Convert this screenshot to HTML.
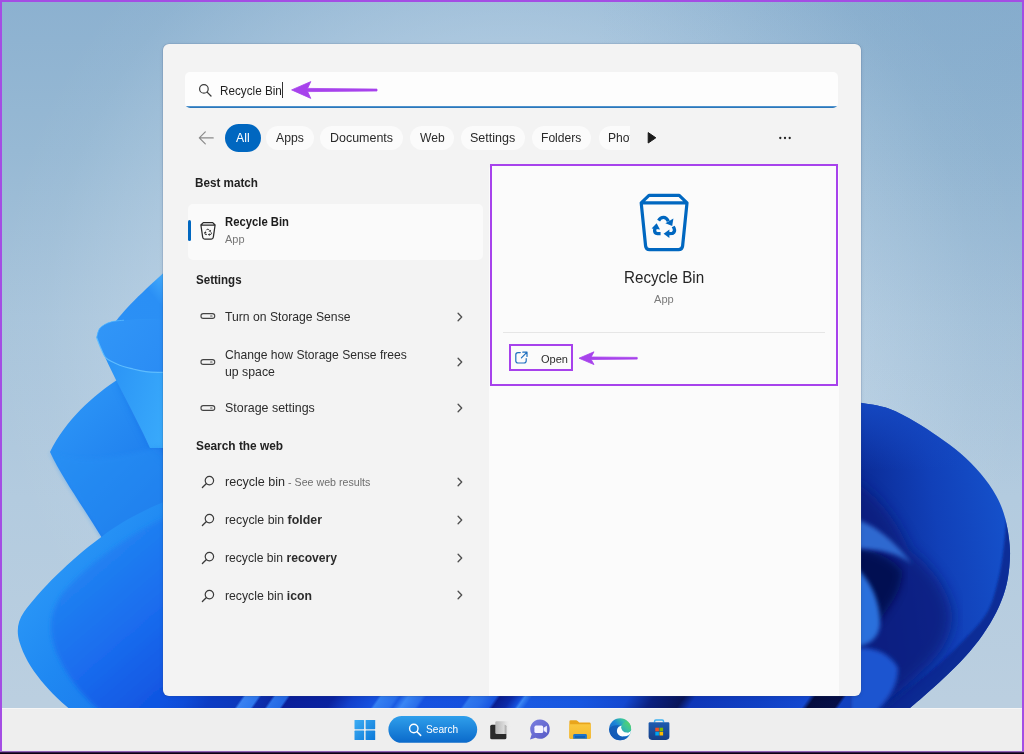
<!DOCTYPE html>
<html>
<head>
<meta charset="utf-8">
<title>Recycle Bin search</title>
<style>
*{box-sizing:border-box;margin:0;padding:0}
html,body{width:1024px;height:754px;overflow:hidden;background:#a9c6dc}
body{position:relative;font-family:"Liberation Sans",sans-serif;color:#1b1b1b}
.abs{position:absolute}
#wall{position:absolute;left:0;top:0;width:1024px;height:754px}
#frame{position:absolute;left:0;top:0;width:1024px;height:754px;border:2px solid #a44de4;border-bottom:0;pointer-events:none;z-index:50}
#frameb{position:absolute;left:0;top:750.6px;width:1024px;height:3.4px;background:linear-gradient(#caa0ec 0,#6d3f97 28%,#14041f 62%,#05000a 100%);z-index:51}
#taskbar{position:absolute;left:0;top:708px;width:1024px;height:46px;background:#eeeeee;border-top:1px solid #f6f6f6}
#panel{position:absolute;left:163px;top:44px;width:698px;height:652px;background:#f3f3f3;border-radius:6px;overflow:hidden;box-shadow:0 0 0 0.6px rgba(60,80,120,0.22),0 1px 4px rgba(0,10,60,0.10)}
#rpane{position:absolute;left:326px;top:120px;width:350px;height:540px;background:#fbfbfb;border-radius:6px 6px 0 0}
#ui{position:absolute;left:0;top:0;width:1024px;height:754px;z-index:10}
.t{position:absolute;white-space:nowrap;transform-origin:0 50%;line-height:1}
.b{font-weight:700}
.g{color:#6b6b6b}
</style>
</head>
<body>
<svg id="wall" viewBox="0 0 1024 754">
<defs>
<linearGradient id="sky" x1="0" y1="0" x2="0" y2="754" gradientUnits="userSpaceOnUse">
<stop offset="0" stop-color="#8cb1d0"/><stop offset="0.2" stop-color="#97b9d4"/><stop offset="0.42" stop-color="#a8c4db"/><stop offset="0.66" stop-color="#b3cbdf"/><stop offset="0.93" stop-color="#bbcfe0"/>
</linearGradient>
<radialGradient id="skyL" cx="512" cy="330" r="520" gradientUnits="userSpaceOnUse">
<stop offset="0" stop-color="#fff" stop-opacity="0.45"/><stop offset="0.55" stop-color="#eef7ff" stop-opacity="0.3"/><stop offset="0.72" stop-color="#eef7ff" stop-opacity="0.17"/><stop offset="0.9" stop-color="#eef7ff" stop-opacity="0.03"/><stop offset="1" stop-color="#eef7ff" stop-opacity="0"/>
</radialGradient>
<radialGradient id="skyR" cx="1024" cy="60" r="430" gradientUnits="userSpaceOnUse">
<stop offset="0" stop-color="#5f8fba" stop-opacity="0.16"/><stop offset="0.6" stop-color="#5f8fba" stop-opacity="0.08"/><stop offset="1" stop-color="#5f8fba" stop-opacity="0"/>
</radialGradient>
<linearGradient id="p1" x1="110" y1="330" x2="170" y2="280" gradientUnits="userSpaceOnUse">
<stop offset="0" stop-color="#2b90f5"/><stop offset="0.7" stop-color="#2a8ff5"/><stop offset="1" stop-color="#46aefc"/>
</linearGradient>
<linearGradient id="p2o" x1="100" y1="380" x2="175" y2="400" gradientUnits="userSpaceOnUse">
<stop offset="0" stop-color="#2a92f5"/><stop offset="1" stop-color="#39aafb"/>
</linearGradient>
<linearGradient id="p2i" x1="100" y1="320" x2="165" y2="370" gradientUnits="userSpaceOnUse">
<stop offset="0" stop-color="#3196f7"/><stop offset="1" stop-color="#2a8cf4"/>
</linearGradient>
<linearGradient id="p3" x1="50" y1="400" x2="165" y2="520" gradientUnits="userSpaceOnUse">
<stop offset="0" stop-color="#2d97f7"/><stop offset="0.6" stop-color="#2182ef"/><stop offset="1" stop-color="#1b72e8"/>
</linearGradient>
<linearGradient id="p4" x1="20" y1="560" x2="170" y2="680" gradientUnits="userSpaceOnUse">
<stop offset="0" stop-color="#2d9bf8"/><stop offset="0.5" stop-color="#1f88f2"/><stop offset="1" stop-color="#1a78ec"/>
</linearGradient>
<linearGradient id="p4i" x1="55" y1="560" x2="175" y2="700" gradientUnits="userSpaceOnUse">
<stop offset="0" stop-color="#2389f3"/><stop offset="0.55" stop-color="#1a6cee"/><stop offset="1" stop-color="#0f52e0"/>
</linearGradient>
<linearGradient id="r1" x1="865" y1="520" x2="1005" y2="500" gradientUnits="userSpaceOnUse">
<stop offset="0" stop-color="#0b2b96"/><stop offset="0.5" stop-color="#1140b8"/><stop offset="1" stop-color="#1551cb"/>
</linearGradient>
<linearGradient id="r1t" x1="0" y1="400" x2="0" y2="470" gradientUnits="userSpaceOnUse">
<stop offset="0" stop-color="#1548c2"/><stop offset="1" stop-color="#1548c2" stop-opacity="0"/>
</linearGradient>
<filter id="bl1"><feGaussianBlur stdDeviation="1"/></filter>
<filter id="bl2"><feGaussianBlur stdDeviation="2"/></filter>
<filter id="bl4"><feGaussianBlur stdDeviation="4"/></filter>
<filter id="bl7"><feGaussianBlur stdDeviation="7"/></filter>
<clipPath id="rclip"><path id="rpath" d="M850.0 401.5 C851.8 401.7 854.2 401.6 860.6 402.8 C867.0 404.0 879.5 405.3 888.6 408.5 C897.8 411.7 907.3 417.2 915.5 421.9 C923.7 426.6 930.5 431.3 938.0 436.5 C945.5 441.7 953.3 447.1 960.4 453.3 C967.5 459.5 974.6 466.4 980.6 473.5 C986.6 480.6 992.2 488.4 996.3 495.9 C1000.4 503.4 1003.0 510.1 1005.2 518.3 C1007.4 526.5 1009.0 536.8 1009.7 545.0 C1010.4 553.2 1010.0 559.9 1009.3 567.4 C1008.5 574.9 1007.4 582.3 1005.2 589.8 C1003.0 597.3 1000.0 604.8 996.3 612.3 C992.6 619.8 988.0 627.2 982.8 634.7 C977.6 642.2 971.2 650.0 964.9 657.1 C958.5 664.2 951.8 670.6 944.7 677.3 C937.6 684.0 928.9 691.7 922.3 697.5 C915.7 703.3 907.9 709.6 905.0 712.0 L850 712 Z"/></clipPath>
</defs>
<rect width="1024" height="754" fill="url(#sky)"/>
<rect width="1024" height="754" fill="url(#skyL)"/>
<rect x="560" y="0" width="464" height="560" fill="url(#skyR)"/>

<path d="M180 258 C150 285 130 303 116 321 L180 330 Z" fill="url(#p1)"/>
<path d="M50 452 C66 420 92 396 120 378 C140 366 160 356 180 350 L180 540 L102 538 C84 508 62 478 50 452 Z" fill="url(#p3)"/>
<path d="M118 380 L150 445 L180 470 L180 360 Z" fill="#1566e2" opacity="0.55" filter="url(#bl4)"/>
<path d="M96.6 337.5 C97.2 335.9 97.7 330.6 100.0 328.0 C102.3 325.4 106.5 323.3 110.5 322.0 C114.5 320.7 118.8 320.6 124.0 320.2 C129.2 319.8 135.7 319.4 142.0 319.4 C148.3 319.3 155.3 319.6 162.0 319.9 C168.7 320.2 178.7 320.8 182.0 321.0 L182 448 L150 448 C134 412 110 372 96.6 337.5 Z" fill="url(#p2o)"/>
<path d="M96.6 337.5 C97.2 335.9 97.7 330.6 100.0 328.0 C102.3 325.4 106.5 323.3 110.5 322.0 C114.5 320.7 118.8 320.6 124.0 320.2 C129.2 319.8 135.7 319.4 142.0 319.4 C148.3 319.3 155.3 319.6 162.0 319.9 C168.7 320.2 178.7 320.8 182.0 321.0 L182 372.8 C178.7 372.7 168.0 372.6 162.0 372.4 C156.0 372.2 150.8 372.2 146.0 371.6 C141.2 371.0 137.4 370.1 133.0 369.0 C128.6 367.9 124.2 367.0 119.8 365.2 C115.4 363.4 109.6 361.1 106.5 358.4 C103.4 355.7 102.9 352.5 101.2 349.0 C99.5 345.5 97.4 339.4 96.6 337.5 Z" fill="url(#p2i)"/>
<path d="M96.6 337.5 C97.4 339.4 99.5 345.5 101.2 349.0 C102.9 352.5 103.4 355.7 106.5 358.4 C109.6 361.1 115.4 363.4 119.8 365.2 C124.2 367.0 128.6 367.9 133.0 369.0 C137.4 370.1 141.2 371.0 146.0 371.6 C150.8 372.2 156.0 372.2 162.0 372.4 C168.0 372.6 178.7 372.7 182.0 372.8" fill="none" stroke="#63c0ff" stroke-width="1.2" opacity="0.9"/>
<path d="M96.6 337.5 C97.2 335.9 97.7 330.6 100.0 328.0 C102.3 325.4 106.5 323.3 110.5 322.0 C114.5 320.7 121.8 320.5 124.0 320.2" fill="none" stroke="#63c0ff" stroke-width="1" opacity="0.7"/>
<path d="M50 452 C70 462 110 462 160 446 L175 470 L175 520 L102 538 C84 508 62 478 50 452 Z" fill="#2590f4" opacity="0.45" filter="url(#bl2)"/>
<path d="M180 496 C150 506 120 522 100 538 C70 560 40 590 24 612 C17 622 16.5 632 19.5 642 C27 668 50 694 76 714 L180 714 Z" fill="url(#p4)"/>
<path d="M180 510 C140 528 90 560 62 594 C48 614 48 634 58 656 C70 682 86 700 104 714 L180 714 Z" fill="url(#p4i)" filter="url(#bl2)"/>
<defs><linearGradient id="strip" x1="163" y1="0" x2="863" y2="0" gradientUnits="userSpaceOnUse"><stop offset="0.0000" stop-color="#0f52e0"/><stop offset="0.0300" stop-color="#0e4cd8"/><stop offset="0.0650" stop-color="#0c3cc4"/><stop offset="0.1071" stop-color="#0c38bc"/><stop offset="0.1114" stop-color="#3a82f2"/><stop offset="0.1300" stop-color="#2f78ee"/><stop offset="0.1343" stop-color="#0d2fae"/><stop offset="0.1500" stop-color="#0c2aa6"/><stop offset="0.1543" stop-color="#2c72ea"/><stop offset="0.1714" stop-color="#2468e4"/><stop offset="0.1757" stop-color="#0a1f9a"/><stop offset="0.2386" stop-color="#0a22a0"/><stop offset="0.2671" stop-color="#1240cc"/><stop offset="0.3014" stop-color="#1652e0"/><stop offset="0.3057" stop-color="#3580f2"/><stop offset="0.3271" stop-color="#2a70ec"/><stop offset="0.3329" stop-color="#1a5ae2"/><stop offset="0.3443" stop-color="#3a86f5"/><stop offset="0.3643" stop-color="#2a6eea"/><stop offset="0.3700" stop-color="#1652e0"/><stop offset="0.4300" stop-color="#1550de"/><stop offset="0.4343" stop-color="#3078ee"/><stop offset="0.4529" stop-color="#2a6eea"/><stop offset="0.4700" stop-color="#1a56e0"/><stop offset="0.4757" stop-color="#0a1e90"/><stop offset="0.4929" stop-color="#0c2aa8"/><stop offset="0.5071" stop-color="#1650dc"/><stop offset="0.5114" stop-color="#3a86f5"/><stop offset="0.5214" stop-color="#1a5ae2"/><stop offset="0.5957" stop-color="#1656e0"/><stop offset="0.6600" stop-color="#1448d0"/><stop offset="0.6957" stop-color="#0a2080"/><stop offset="0.7386" stop-color="#08155a"/><stop offset="0.7557" stop-color="#0e36b8"/><stop offset="0.8529" stop-color="#1040c4"/><stop offset="0.9171" stop-color="#1448d0"/><stop offset="0.9257" stop-color="#050d40"/><stop offset="0.9643" stop-color="#060f48"/><stop offset="0.9700" stop-color="#1040c0"/><stop offset="1.0000" stop-color="#1140bc"/></linearGradient></defs>
<clipPath id="stripc"><rect x="160" y="688" width="706" height="24"/></clipPath>
<g clip-path="url(#stripc)"><g transform="skewX(-35) translate(492,0)"><rect x="150" y="688" width="760" height="24" fill="url(#strip)"/></g></g>
<path d="M850.0 401.5 C851.8 401.7 854.2 401.6 860.6 402.8 C867.0 404.0 879.5 405.3 888.6 408.5 C897.8 411.7 907.3 417.2 915.5 421.9 C923.7 426.6 930.5 431.3 938.0 436.5 C945.5 441.7 953.3 447.1 960.4 453.3 C967.5 459.5 974.6 466.4 980.6 473.5 C986.6 480.6 992.2 488.4 996.3 495.9 C1000.4 503.4 1003.0 510.1 1005.2 518.3 C1007.4 526.5 1009.0 536.8 1009.7 545.0 C1010.4 553.2 1010.0 559.9 1009.3 567.4 C1008.5 574.9 1007.4 582.3 1005.2 589.8 C1003.0 597.3 1000.0 604.8 996.3 612.3 C992.6 619.8 988.0 627.2 982.8 634.7 C977.6 642.2 971.2 650.0 964.9 657.1 C958.5 664.2 951.8 670.6 944.7 677.3 C937.6 684.0 928.9 691.7 922.3 697.5 C915.7 703.3 907.9 709.6 905.0 712.0 L850 712 Z" fill="url(#r1)"/>
<g clip-path="url(#rclip)">
<rect x="850" y="395" width="180" height="80" fill="url(#r1t)"/>
<path d="M1008.0 500.0 C1007.3 507.5 1005.6 531.9 1004.0 545.0 C1002.4 558.1 1001.3 567.4 998.5 578.6 C995.7 589.8 993.3 601.8 987.3 612.3 C981.3 622.8 972.3 631.3 962.6 641.4 C952.9 651.5 941.1 662.9 929.0 672.8 C916.9 682.7 899.5 693.8 890.0 701.0 C880.5 708.2 875.0 713.5 872.0 716.0 L905 720 L1030 720 L1030 500 Z" fill="#0b2b92" opacity="0.9" filter="url(#bl1)"/>
<path d="M850 480 C875 490 900 525 909 550 C931 566 948 588 952 612 C954 635 940 655 925 668 C905 688 884 702 870 716 L850 716 Z" fill="#0a1f7c" opacity="0.8" filter="url(#bl7)"/>
<path d="M850 548 C868 548 890 556 902 570 C903 590 890 605 880 620 L850 630 Z" fill="#050d4c" opacity="0.85" filter="url(#bl4)"/>
<path d="M850 518 C868 521 890 535 912 564 C898 553 880 549 850 548 Z" fill="#2f69d0" filter="url(#bl2)"/>
<path d="M850 564 C866 572 881 598 880 625 C878 640 868 646 850 648 Z" fill="#2a6fdc" filter="url(#bl2)"/>
<path d="M850 650 C868 644 890 652 898 668 C898 690 884 704 872 716 L850 716 Z" fill="#1d55d0" filter="url(#bl2)"/>
</g>
</svg>

<div id="taskbar">

</div>

<div id="panel">
<div id="rpane"></div>

</div>

<div id="ui">
<!--UI-START-->
<svg class="abs" style="left:340px;top:712px" width="340" height="36" viewBox="340 712 340 36">
<defs>
<linearGradient id="wg" x1="354" y1="720" x2="375" y2="740" gradientUnits="userSpaceOnUse"><stop offset="0" stop-color="#3eaef4"/><stop offset="1" stop-color="#0b78d8"/></linearGradient>
<linearGradient id="sg" x1="0" y1="716" x2="0" y2="743" gradientUnits="userSpaceOnUse"><stop offset="0" stop-color="#2f9feb"/><stop offset="1" stop-color="#0a69ca"/></linearGradient>
<linearGradient id="tv" x1="495" y1="0" x2="511" y2="0" gradientUnits="userSpaceOnUse"><stop offset="0" stop-color="#b4b4b4"/><stop offset="0.55" stop-color="#d9d9d9"/><stop offset="1" stop-color="#eeeeee" stop-opacity="0"/></linearGradient>
<linearGradient id="tm" x1="530" y1="720" x2="550" y2="740" gradientUnits="userSpaceOnUse"><stop offset="0" stop-color="#7a7ee0"/><stop offset="1" stop-color="#5558c4"/></linearGradient>
<linearGradient id="fo" x1="0" y1="720" x2="0" y2="739" gradientUnits="userSpaceOnUse"><stop offset="0" stop-color="#fbcb45"/><stop offset="1" stop-color="#f5b92a"/></linearGradient>
<linearGradient id="ed" x1="612" y1="738" x2="630" y2="720" gradientUnits="userSpaceOnUse"><stop offset="0" stop-color="#1560c0"/><stop offset="0.5" stop-color="#1c84d8"/><stop offset="0.78" stop-color="#35c0a8"/><stop offset="1" stop-color="#58d45e"/></linearGradient>
<linearGradient id="ed2" x1="621" y1="733" x2="631" y2="722" gradientUnits="userSpaceOnUse"><stop offset="0" stop-color="#2a9fc4"/><stop offset="0.5" stop-color="#3cc39c"/><stop offset="1" stop-color="#5ad65c"/></linearGradient>
<linearGradient id="st" x1="0" y1="722" x2="0" y2="740" gradientUnits="userSpaceOnUse"><stop offset="0" stop-color="#1d5cb0"/><stop offset="1" stop-color="#173f88"/></linearGradient>
</defs>
<!-- windows logo -->
<g fill="url(#wg)"><rect x="354.5" y="719.9" width="9.6" height="9.3" rx="0.6"/><rect x="365.6" y="719.9" width="9.6" height="9.3" rx="0.6"/><rect x="354.5" y="730.6" width="9.6" height="9.4" rx="0.6"/><rect x="365.6" y="730.6" width="9.6" height="9.4" rx="0.6"/></g>
<!-- search pill -->
<rect x="388.4" y="716" width="88.8" height="26.8" rx="13.4" fill="url(#sg)"/>
<circle cx="413.8" cy="728.5" r="4.2" fill="none" stroke="#fff" stroke-width="1.4"/><path d="M417 731.8 L420.7 735.4" stroke="#fff" stroke-width="1.5" stroke-linecap="round"/>
<!-- task view -->
<rect x="490.2" y="724.7" width="16.2" height="14.6" rx="1.6" fill="#2a2a2a"/>
<rect x="495.3" y="721.2" width="16.4" height="12.9" rx="1.4" fill="url(#tv)"/>
<!-- teams chat -->
<path d="M540.1 719.4 A9.7 9.7 0 1 1 535.6 737.7 L530 739.4 L531.7 734.2 A9.7 9.7 0 0 1 540.1 719.4 Z" fill="url(#tm)"/>
<rect x="534.4" y="725.6" width="8.8" height="7.4" rx="1.6" fill="#f4f3ff"/><path d="M544 728 L546.6 726.3 V732.3 L544 730.6 Z" fill="#f4f3ff" stroke="#f4f3ff" stroke-width="0.8" stroke-linejoin="round"/>
<!-- file explorer -->
<path d="M569.4 721.6 Q569.4 720.3 570.7 720.3 H576.2 Q577 720.3 577.6 720.9 L579.2 722.4 H589.4 Q590.7 722.4 590.7 723.7 V737.4 Q590.7 738.7 589.4 738.7 H570.7 Q569.4 738.7 569.4 737.4 Z" fill="#e9a51c"/>
<path d="M569.4 724.2 H590.7 V737.4 Q590.7 738.7 589.4 738.7 H570.7 Q569.4 738.7 569.4 737.4 Z" fill="url(#fo)"/>
<path d="M573.2 738.7 V735.4 Q573.2 734 574.6 734 H585.5 Q586.9 734 586.9 735.4 V738.7 Z" fill="#1b74ca"/>
<rect x="575" y="736.2" width="10" height="1.6" fill="#0f5cb0"/>
<!-- edge -->
<clipPath id="edc"><circle cx="620.1" cy="729.3" r="11"/></clipPath>
<circle cx="620.1" cy="729.3" r="11" fill="url(#ed)"/>
<g clip-path="url(#edc)">
<path d="M609 729 C609 736 614 741 621 741 C626 741 630 738 631.5 734 C628 737.5 622 738 619 734.5 C616.5 731.5 617 727.5 620 725.5 C615 724.5 610.5 726 609 729 Z" fill="#1357b2" opacity="0.75"/>
<circle cx="622.4" cy="730.9" r="5.5" fill="#fdfefe"/>
<path d="M622 735.6 C625 737 629.6 735.6 631.4 732.4 L631.4 730.4 C628 733.4 624 734 622 735.6 Z" fill="#fdfefe"/>
<circle cx="626.6" cy="727.2" r="5.4" fill="url(#ed2)"/>
</g>
<!-- store -->
<path d="M654.6 722.6 V721.2 Q654.6 719.9 655.9 719.9 H662.2 Q663.5 719.9 663.5 721.2 V722.6" fill="none" stroke="#3fb2f2" stroke-width="1.5"/>
<path d="M648.6 723.4 Q648.6 722.3 649.7 722.3 H668.3 Q669.4 722.3 669.4 723.4 V736.6 Q669.4 739.9 666.1 739.9 H651.9 Q648.6 739.9 648.6 736.6 Z" fill="url(#st)"/>
<rect x="655.3" y="727.7" width="3.6" height="3.6" fill="#f25022"/><rect x="659.5" y="727.7" width="3.6" height="3.6" fill="#7fba00"/><rect x="655.3" y="731.9" width="3.6" height="3.6" fill="#00a4ef"/><rect x="659.5" y="731.9" width="3.6" height="3.6" fill="#ffb900"/>
</svg>
<div class="abs" style="left:185px;top:72.2px;width:653px;height:36.3px;background:#fdfdfd;border-radius:5px;overflow:hidden"><div class="abs" style="left:0;bottom:0;width:100%;height:2.6px;background:linear-gradient(#9ccaee 0,#2f7cc0 35%,#2a74b6 100%)"></div></div>
<svg class="abs" style="left:197px;top:82px" width="16" height="16" viewBox="0 0 16 16"><circle cx="6.9" cy="6.9" r="4.3" fill="none" stroke="#3a3a3a" stroke-width="1.2"/><path d="M10.1 10.1 L14 14" stroke="#3a3a3a" stroke-width="1.3" stroke-linecap="round"/></svg>
<div class="abs" style="left:282.2px;top:81.6px;width:1px;height:16.6px;background:#333"></div>
<svg class="abs" style="left:286px;top:76px" width="100" height="28" viewBox="286 76 100 28"><path d="M291.6 89.9 L310.8 81.6 L307.6 88.4 L377 89.1 L377 91 L307.6 91.6 L310.8 98.4 Z" fill="#a742ec" stroke="#a742ec" stroke-width="0.8" stroke-linejoin="round"/></svg>
<svg class="abs" style="left:196px;top:129px" width="20" height="18" viewBox="196 129 20 18"><path d="M213.2 137.9 H199.6 M205.3 131.9 L199.3 137.9 L205.3 143.9" fill="none" stroke="#8a8a8a" stroke-width="1.2" stroke-linecap="round" stroke-linejoin="round"/></svg>
<div class="abs" style="left:225px;top:124px;width:35.8px;height:27.8px;border-radius:13.9px;background:#0067c0;"></div>
<div class="abs" style="left:266.2px;top:125.6px;width:47.6px;height:24.8px;border-radius:12.4px;background:#fbfbfb;"></div>
<div class="abs" style="left:320px;top:125.6px;width:83.0px;height:24.8px;border-radius:12.4px;background:#fbfbfb;"></div>
<div class="abs" style="left:410px;top:125.6px;width:43.8px;height:24.8px;border-radius:12.4px;background:#fbfbfb;"></div>
<div class="abs" style="left:460.6px;top:125.6px;width:64.4px;height:24.8px;border-radius:12.4px;background:#fbfbfb;"></div>
<div class="abs" style="left:532px;top:125.6px;width:59.2px;height:24.8px;border-radius:12.4px;background:#fbfbfb;"></div>
<svg class="abs" style="left:645px;top:130px" width="14" height="16" viewBox="645 130 14 16"><path d="M648.2 132.6 L655.8 137.8 L648.2 143 Z" fill="#1a1a1a" stroke="#1a1a1a" stroke-width="1" stroke-linejoin="round"/></svg>
<svg class="abs" style="left:777px;top:134px" width="16" height="8" viewBox="777 134 16 8"><circle cx="780.3" cy="138" r="1.15" fill="#222"/><circle cx="785" cy="138" r="1.15" fill="#222"/><circle cx="789.7" cy="138" r="1.15" fill="#222"/></svg>
<div class="abs" style="left:187.5px;top:204px;width:295px;height:55.5px;border-radius:5px;background:#fafafa"></div>
<div class="abs" style="left:188px;top:220px;width:3px;height:21px;border-radius:1.5px;background:#0067c0"></div>
<svg class="abs" style="left:198px;top:220px" width="20" height="22" viewBox="198 220 20 22">
<path d="M203.3 222.6 H212.7 L215.1 225 L213.3 237.3 Q213.1 239.2 211.2 239.2 H204.8 Q202.9 239.2 202.7 237.3 L200.9 225 Z M201 225.1 H215" fill="none" stroke="#2a2a2a" stroke-width="1.25" stroke-linejoin="round"/>
<g transform="translate(208,232.4) scale(0.33) translate(-664.1,-227)">
<g fill="none" stroke="#2a2a2a" stroke-width="3.0" stroke-linejoin="round">
<path d="M658.6 220.6 Q660.4 217.3 663.6 217.3 Q666.4 217.3 668.4 221.2"/>
<path d="M660.6 233.6 H657.4 Q654.4 233.4 654.6 230.2 L655.2 228.2"/>
<path d="M673.2 226.6 L674.2 228.6 Q675.4 231.6 672.6 233.4 L668.6 233.6"/>
</g>
<g fill="#2a2a2a">
<path d="M673.4 218.6 L672.2 226 L665.4 223.2 Z"/>
<path d="M651.6 228.6 L656.6 223.2 L660 229.6 Z"/>
<path d="M669.4 229.4 V238 L663.6 233.7 Z"/>
</g></g>
</svg>
<svg class="abs" style="left:199px;top:310.0px" width="18" height="12" viewBox="0 0 18 12"><rect x="2.0" y="3.6" width="13.7" height="4.8" rx="2.2" fill="none" stroke="#444" stroke-width="1.15"/><path d="M11.6 6 H13" stroke="#555" stroke-width="1.1" stroke-linecap="round"/></svg>
<svg class="abs" style="left:199px;top:355.8px" width="18" height="12" viewBox="0 0 18 12"><rect x="2.0" y="3.6" width="13.7" height="4.8" rx="2.2" fill="none" stroke="#444" stroke-width="1.15"/><path d="M11.6 6 H13" stroke="#555" stroke-width="1.1" stroke-linecap="round"/></svg>
<svg class="abs" style="left:199px;top:402.4px" width="18" height="12" viewBox="0 0 18 12"><rect x="2.0" y="3.6" width="13.7" height="4.8" rx="2.2" fill="none" stroke="#444" stroke-width="1.15"/><path d="M11.6 6 H13" stroke="#555" stroke-width="1.1" stroke-linecap="round"/></svg>
<svg class="abs" style="left:455px;top:309.5px" width="10" height="14" viewBox="0 0 10 14"><path d="M3.1 3.3 L6.7 7 L3.1 10.7" fill="none" stroke="#505050" stroke-width="1.35" stroke-linecap="round" stroke-linejoin="round"/></svg>
<svg class="abs" style="left:455px;top:355.0px" width="10" height="14" viewBox="0 0 10 14"><path d="M3.1 3.3 L6.7 7 L3.1 10.7" fill="none" stroke="#505050" stroke-width="1.35" stroke-linecap="round" stroke-linejoin="round"/></svg>
<svg class="abs" style="left:455px;top:400.9px" width="10" height="14" viewBox="0 0 10 14"><path d="M3.1 3.3 L6.7 7 L3.1 10.7" fill="none" stroke="#505050" stroke-width="1.35" stroke-linecap="round" stroke-linejoin="round"/></svg>
<svg class="abs" style="left:455px;top:475.2px" width="10" height="14" viewBox="0 0 10 14"><path d="M3.1 3.3 L6.7 7 L3.1 10.7" fill="none" stroke="#505050" stroke-width="1.35" stroke-linecap="round" stroke-linejoin="round"/></svg>
<svg class="abs" style="left:455px;top:513px" width="10" height="14" viewBox="0 0 10 14"><path d="M3.1 3.3 L6.7 7 L3.1 10.7" fill="none" stroke="#505050" stroke-width="1.35" stroke-linecap="round" stroke-linejoin="round"/></svg>
<svg class="abs" style="left:455px;top:550.7px" width="10" height="14" viewBox="0 0 10 14"><path d="M3.1 3.3 L6.7 7 L3.1 10.7" fill="none" stroke="#505050" stroke-width="1.35" stroke-linecap="round" stroke-linejoin="round"/></svg>
<svg class="abs" style="left:455px;top:588.4px" width="10" height="14" viewBox="0 0 10 14"><path d="M3.1 3.3 L6.7 7 L3.1 10.7" fill="none" stroke="#505050" stroke-width="1.35" stroke-linecap="round" stroke-linejoin="round"/></svg>
<svg class="abs" style="left:199px;top:474.3px" width="18" height="16" viewBox="0 0 18 16"><circle cx="10.4" cy="6.6" r="4.2" fill="none" stroke="#3a3a3a" stroke-width="1.2"/><path d="M7.2 9.8 L3.4 13.5" stroke="#3a3a3a" stroke-width="1.3" stroke-linecap="round"/></svg>
<svg class="abs" style="left:199px;top:512.1px" width="18" height="16" viewBox="0 0 18 16"><circle cx="10.4" cy="6.6" r="4.2" fill="none" stroke="#3a3a3a" stroke-width="1.2"/><path d="M7.2 9.8 L3.4 13.5" stroke="#3a3a3a" stroke-width="1.3" stroke-linecap="round"/></svg>
<svg class="abs" style="left:199px;top:549.8px" width="18" height="16" viewBox="0 0 18 16"><circle cx="10.4" cy="6.6" r="4.2" fill="none" stroke="#3a3a3a" stroke-width="1.2"/><path d="M7.2 9.8 L3.4 13.5" stroke="#3a3a3a" stroke-width="1.3" stroke-linecap="round"/></svg>
<svg class="abs" style="left:199px;top:587.5px" width="18" height="16" viewBox="0 0 18 16"><circle cx="10.4" cy="6.6" r="4.2" fill="none" stroke="#3a3a3a" stroke-width="1.2"/><path d="M7.2 9.8 L3.4 13.5" stroke="#3a3a3a" stroke-width="1.3" stroke-linecap="round"/></svg>
<svg class="abs" style="left:634px;top:188px" width="60" height="68" viewBox="634 188 60 68">
<path d="M649 195.4 H679.2 L687 202.9 L682.6 246 Q682.2 249.6 678.6 249.6 H649.6 Q646 249.6 645.6 246 L641.2 202.9 Z M641.4 202.9 H686.8" fill="none" stroke="#0067c0" stroke-width="3.2" stroke-linejoin="round"/>
<g fill="none" stroke="#0067c0" stroke-width="3.3" stroke-linejoin="round">
<path d="M658.6 220.6 Q660.4 217.3 663.6 217.3 Q666.4 217.3 668.4 221.2"/>
<path d="M660.6 233.6 H657.4 Q654.4 233.4 654.6 230.2 L655.2 228.2"/>
<path d="M673.2 226.6 L674.2 228.6 Q675.4 231.6 672.6 233.4 L668.6 233.6"/>
</g>
<g fill="#0067c0">
<path d="M673.4 218.6 L672.2 226 L665.4 223.2 Z"/>
<path d="M651.6 228.6 L656.6 223.2 L660 229.6 Z"/>
<path d="M669.4 229.4 V238 L663.6 233.7 Z"/>
</g>
</svg>
<div class="abs" style="left:503px;top:332px;width:322px;height:1px;background:#e6e6e6"></div>
<svg class="abs" style="left:513px;top:349px" width="18" height="18" viewBox="513 349 18 18">
<path d="M520.3 352.6 H518 Q515.8 352.6 515.8 354.8 V360.8 Q515.8 363 518 363 H524 Q526.2 363 526.2 360.8 V358.6" fill="none" stroke="#1f6fbf" stroke-width="1.2" stroke-linecap="round"/>
<path d="M522.8 352.2 H527 V356.4 M526.8 352.4 L521.4 357.8" fill="none" stroke="#1f6fbf" stroke-width="1.2" stroke-linecap="round" stroke-linejoin="round"/>
</svg>
<div class="abs" style="left:489.7px;top:164.2px;width:348.8px;height:221.7px;border:2.3px solid #a742ec"></div>
<div class="abs" style="left:509.4px;top:344.2px;width:63.6px;height:27px;border:2px solid #a742ec"></div>
<svg class="abs" style="left:574px;top:346px" width="70" height="26" viewBox="574 346 70 26"><path d="M579 358.2 L594 351.8 L591.2 357 L637.2 357.4 L637.2 359.1 L591.2 359.5 L594 364.6 Z" fill="#a742ec" stroke="#a742ec" stroke-width="0.8" stroke-linejoin="round"/></svg>
<span class="t" style="left:220.3px;top:83.83px;font-size:13.2px;font-weight:400;color:#1f1f1f;transform:scaleX(0.8888)">Recycle Bin</span>
<span class="t" style="left:236.4px;top:131.30px;font-size:13px;font-weight:400;color:#ffffff;transform:scaleX(0.9410)">All</span>
<span class="t" style="left:276.4px;top:131.30px;font-size:13px;font-weight:400;color:#2a2a2a;transform:scaleX(0.9379)">Apps</span>
<span class="t" style="left:330.2px;top:131.30px;font-size:13px;font-weight:400;color:#2a2a2a;transform:scaleX(0.9582)">Documents</span>
<span class="t" style="left:419.6px;top:131.30px;font-size:13px;font-weight:400;color:#2a2a2a;transform:scaleX(0.9283)">Web</span>
<span class="t" style="left:470.2px;top:131.30px;font-size:13px;font-weight:400;color:#2a2a2a;transform:scaleX(0.9642)">Settings</span>
<span class="t" style="left:541.4px;top:131.30px;font-size:13px;font-weight:400;color:#2a2a2a;transform:scaleX(0.9294)">Folders</span>
<div class="abs" style="left:598px;top:120px;width:32.2px;height:36px;overflow:hidden"><div class="abs" style="left:0.6px;top:5.6px;width:62px;height:24.8px;border-radius:12.4px;background:#fbfbfb"></div><span class="t" style="left:9.600000000000023px;top:11.30px;font-size:13px;font-weight:400;color:#2a2a2a;transform:scaleX(0.9300)">Photos</span></div>
<span class="t" style="left:194.5px;top:175.90px;font-size:13px;font-weight:700;color:#222;transform:scaleX(0.8990)">Best match</span>
<span class="t" style="left:225.0px;top:214.83px;font-size:13.2px;font-weight:700;color:#1c1c1c;transform:scaleX(0.8558)">Recycle Bin</span>
<span class="t" style="left:225.0px;top:233.89px;font-size:11px;font-weight:400;color:#767676;transform:scaleX(0.9960)">App</span>
<span class="t" style="left:195.9px;top:273.00px;font-size:13px;font-weight:700;color:#222;transform:scaleX(0.8889)">Settings</span>
<span class="t" style="left:224.6px;top:309.50px;font-size:13px;font-weight:400;color:#2c2c2c;transform:scaleX(0.9370)">Turn on Storage Sense</span>
<span class="t" style="left:224.6px;top:347.70px;font-size:13px;font-weight:400;color:#2c2c2c;transform:scaleX(0.9321)">Change how Storage Sense frees</span>
<span class="t" style="left:224.6px;top:365.10px;font-size:13px;font-weight:400;color:#2c2c2c;transform:scaleX(0.9457)">up space</span>
<span class="t" style="left:224.6px;top:401.30px;font-size:13px;font-weight:400;color:#2c2c2c;transform:scaleX(0.9558)">Storage settings</span>
<span class="t" style="left:195.9px;top:439.00px;font-size:13px;font-weight:700;color:#222;transform:scaleX(0.9132)">Search the web</span>
<span class="t" style="left:224.7px;top:475.30px;font-size:13px;font-weight:400;color:#2c2c2c;transform:scaleX(0.9675)">recycle bin<span style='font-size:11px;color:#6e6e6e'> - See web results</span></span>
<span class="t" style="left:224.7px;top:513.30px;font-size:13px;font-weight:400;color:#2c2c2c;transform:scaleX(0.9521)">recycle bin <b>folder</b></span>
<span class="t" style="left:224.7px;top:550.90px;font-size:13px;font-weight:400;color:#2c2c2c;transform:scaleX(0.9344)">recycle bin <b>recovery</b></span>
<span class="t" style="left:224.7px;top:588.70px;font-size:13px;font-weight:400;color:#2c2c2c;transform:scaleX(0.9407)">recycle bin <b>icon</b></span>
<span class="t" style="left:624.0px;top:269.94px;font-size:15.9px;font-weight:400;color:#242424;transform:scaleX(0.9558)">Recycle Bin</span>
<span class="t" style="left:653.9px;top:293.89px;font-size:11px;font-weight:400;color:#7a7a7a;transform:scaleX(1.0062)">App</span>
<span class="t" style="left:540.6px;top:352.58px;font-size:11.6px;font-weight:400;color:#2c2c2c;transform:scaleX(0.9515)">Open</span>
<span class="t" style="left:426.0px;top:724.21px;font-size:11.8px;font-weight:400;color:#ffffff;transform:scaleX(0.8585)">Search</span>
<!--UI-END-->
</div>
<div id="frame"></div><div id="frameb"></div>
</body>
</html>
